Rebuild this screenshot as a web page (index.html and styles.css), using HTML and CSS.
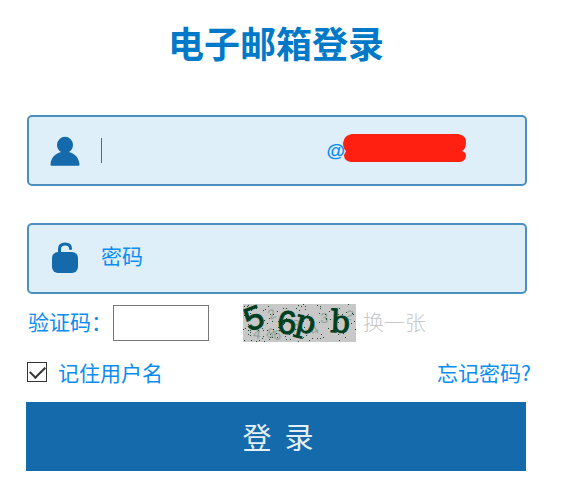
FILE: index.html
```html
<!DOCTYPE html>
<html lang="zh-CN">
<head>
<meta charset="utf-8">
<meta name="viewport" content="width=device-width, initial-scale=1">
<title>电子邮箱登录</title>
<link rel="stylesheet" href="styles.css">
</head>
<body>
<main class="login">
  <h1 class="title">电子邮箱登录</h1>
  <form class="form">
    <div class="field">
      <svg class="icon" viewBox="0 0 30 30" aria-hidden="true">
        <path d="M15 .8a8 8 0 0 1 8 8c0 3.200-1.500 5.700-4 7.200 6 1.500 10 6 10.500 12.200 0 1-.5 1.500-1.500 1.500H2c-1 0-1.500-.5-1.500-1.500C1 22 5 17.500 11 16c-2.500-1.500-4-4-4-7.200a8 8 0 0 1 8-8z"/>
      </svg>
      <span class="caret"></span>
      <input class="input" type="text" aria-label="用户名">
      <span class="domain">@<svg class="redaction" viewBox="0 0 124 28" aria-hidden="true"><path d="M9 0H115Q123 1 123 8Q123 15 119 17Q123 18 123 22Q122 28 116 28H8Q1 27 1 21L3 17Q0 14 0 9Q1 1 9 0z"/></svg></span>
    </div>
    <div class="field">
      <svg class="icon" viewBox="0 0 30 30" aria-hidden="true">
        <rect x="2" y="8" width="26" height="21" rx="6"/>
        <path class="shackle" d="M9.500 12V5q0-5 5.500-5T20.500 4.500"/>
      </svg>
      <input class="input" type="password" placeholder="密码" aria-label="密码">
    </div>
    <div class="row verify">
      <label class="lift" for="code">验证码：</label>
      <input class="code" id="code" type="text">
      <svg class="captcha" viewBox="0 0 113 38" role="img" aria-label="验证码图片">
        <rect width="113" height="38" fill="#c8c8c8"/>
        <g class="ghost">
          <text x="27" y="16" transform="rotate(-25 27 16)">2</text>
          <text x="9" y="34" transform="rotate(8 9 34)">4</text>
          <text x="22" y="32" transform="rotate(20 22 32)">8</text>
          <text x="30" y="36">6</text>
          <text x="49" y="26">8</text>
          <text x="70" y="32" transform="rotate(-30 70 32)">4</text>
          <text x="77" y="19">3</text>
          <text x="101" y="14" transform="rotate(20 101 14)">2</text>
        </g>
        <g id="noise"></g>
        <g class="chars">
          <text x="5" y="28" transform="rotate(-20 5 28)">5</text>
          <text x="33" y="29" transform="rotate(4 33 29)">6</text>
          <text class="slab" x="51" y="26" transform="rotate(13 51 26)">p</text>
          <text class="slab" x="87" y="28" transform="rotate(2 87 28)">b</text>
        </g>
      </svg>
      <a class="refresh lift" href="#">换一张</a>
    </div>
    <div class="row options">
      <label class="remember"><input class="tick" type="checkbox" checked>记住用户名</label>
      <a class="forgot" href="#">忘记密码?</a>
    </div>
    <button class="submit" type="submit">登&nbsp; 录</button>
  </form>
</main>
<script src="noise.js"></script>
</body>
</html>
```
FILE: styles.css
```css
* { box-sizing: border-box; }

body {
  margin: 0;
  background: #fff;
  color: #0a8cf0;
  font: 21px/28px "Noto Sans CJK SC", sans-serif;
}

a { color: inherit; text-decoration: none; }
input, button { font: inherit; color: inherit; border-radius: 0; }

.login { padding: 14px 42px 24px 26px; }

.title {
  margin: 0 0 45px;
  font-size: 36px;
  line-height: 56px;
  font-weight: 700;
  text-align: center;
  color: #007ac8;
}

.form { display: flex; flex-direction: column; }

.field {
  display: flex;
  align-items: center;
  height: 71px;
  margin: 0 -1px 37px 1px;
  padding: 0 58px 0 21px;
  border: 2px solid #4b8fbf;
  border-radius: 5px;
  background: #deeffa;
}

.icon { width: 30px; height: 30px; margin-right: 21px; fill: #146aaa; flex: none; overflow: visible; }
.shackle { fill: none; stroke: #146aaa; stroke-width: 3; stroke-linecap: round; }
.caret { width: 1px; height: 25px; background: #0a80d0; }

.input {
  flex: 1;
  min-width: 0;
  height: 40px;
  padding: 0 0 8px;
  border: 0;
  outline: 0;
  background: none;
}
.input::placeholder { color: #0a8cf0; opacity: 1; }

.domain { display: flex; font-family: "Liberation Sans", Arial, sans-serif; font-size: 19px; font-weight: 700; }
.redaction { width: 124px; height: 28px; margin: -3px 0 0 -2px; fill: #ff2012; }

.row { display: flex; align-items: center; }
.verify { height: 38px; margin: -27px 0 16px 2px; }
.lift { padding-bottom: 5px; }
.code { width: 96px; height: 36px; margin-left: 1px; border: 1px solid #767676; background: #fff; }
.captcha { width: 113px; height: 38px; margin: 0 7px 0 34px; flex: none; }
.chars { font: 34px "Liberation Mono", monospace; fill: #004022; stroke: #004022; stroke-width: 1; }
.slab { font: 31px "DejaVu Serif", serif; }
.ghost { font: 14px "Liberation Mono", monospace; fill: #91a398; }
.refresh { color: #c8c8c8; font-weight: 300; }

.options { justify-content: space-between; height: 28px; margin: 0 -5px 16px 0; }
.remember { display: flex; align-items: center; }
.tick {
  appearance: none;
  width: 20px;
  height: 20px;
  margin: 0 11px 0 1px;
  border: 1px solid #333;
  display: grid;
  place-items: center;
}
.tick:checked::before {
  content: "";
  width: 13px;
  height: 7px;
  border: solid #333;
  border-width: 0 0 2px 2px;
  transform: translateY(-2px) rotate(-45deg);
}

.submit {
  height: 69px;
  padding: 0 0 2px 4px;
  border: 0;
  background: #146aaa;
  color: #e4eff7;
  font-size: 29px;
}
```
FILE: noise.js
```js
// Scatter the captcha speckles from a fixed seed.
const layer = document.getElementById("noise");
let seed = 17;
const next = (max) => {
  seed = (seed * 16807) % 2147483647;
  return seed % max;
};
for (let i = 0; i < 130; i++) {
  const dot = document.createElementNS("http://www.w3.org/2000/svg", "rect");
  dot.setAttribute("x", next(113));
  dot.setAttribute("y", next(38));
  dot.setAttribute("width", 1);
  dot.setAttribute("height", 1);
  dot.setAttribute("fill", "#174b32");
  layer.append(dot);
}
```
